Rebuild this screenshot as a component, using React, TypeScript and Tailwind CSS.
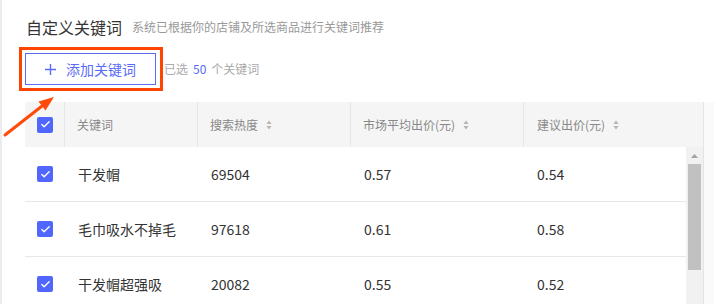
import { Check } from 'lucide-react';

const rows = [
  { keyword: "干发帽", heat: "69504", avg: "0.57", suggest: "0.54" },
  { keyword: "毛巾吸水不掉毛", heat: "97618", avg: "0.61", suggest: "0.58" },
  { keyword: "干发帽超强吸", heat: "20082", avg: "0.55", suggest: "0.52" },
];

function SortIcon() {
  return (
    <svg width="6" height="10" viewBox="0 0 6 10" className="ml-[8px]">
      <path d="M3 0.5 L5.5 4 H0.5 Z" fill="#b5b5b5" />
      <path d="M3 9.5 L5.5 6 H0.5 Z" fill="#b5b5b5" />
    </svg>
  );
}

function Checkbox() {
  return (
    <div className="w-[16px] h-[16px] rounded-[2px] bg-[#5066ff] flex items-center justify-center">
      <Check className="w-[11px] h-[11px] text-white" strokeWidth={3} />
    </div>
  );
}

export default function App() {
  return (
    <div className="relative w-[714px] h-[304px] overflow-hidden bg-white border-l-2 border-[#ececec] font-['Noto_Sans_CJK_SC',sans-serif]">
      {/* title */}
      <div className="flex items-center pl-[24px] pt-[15px] h-[39px]">
        <span className="text-[16px] leading-[24px] text-[#333]">自定义关键词</span>
        <span className="ml-[10px] text-[12px] text-[#999]">系统已根据你的店铺及所选商品进行关键词推荐</span>
      </div>

      {/* add button row */}
      <div className="flex items-center pl-[17px] mt-[8px]">
        <div className="border-[3px] border-[#ff4400] p-[3px] pr-[4px]">
          <button className="w-[131px] h-[32px] border border-[#5a6cf6] flex items-center justify-center gap-[10px] text-[14px] text-[#5a6cf6]">
            <svg width="11" height="11" viewBox="0 0 11 11">
              <path d="M5.5 0 V11 M0 5.5 H11" stroke="#5a6cf6" strokeWidth="1.4" />
            </svg>
            <span>添加关键词</span>
          </button>
        </div>
        <span className="ml-[1px] text-[12px] text-[#aaa]">
          已选<span className="mx-[5px] text-[#5a6cf6]">50</span>个关键词
        </span>
      </div>

      {/* table */}
      <div className="flex ml-[23px] mt-[11px] h-[220px]">
        <div className="w-[678px] flex flex-col">
          <div className="flex shrink-0 h-[45px] bg-[#f5f5f5] text-[12px] text-[#888]">
            <div className="w-[40px] flex items-center pl-[12px] border-r border-[#e6e6e6]">
              <Checkbox />
            </div>
            <div className="w-[133px] flex items-center pl-[12px] border-r border-[#e6e6e6]">关键词</div>
            <div className="w-[153px] flex items-center pl-[12px] border-r border-[#e6e6e6]">
              搜索热度<SortIcon />
            </div>
            <div className="w-[173px] flex items-center pl-[12px] border-r border-[#e6e6e6]">
              市场平均出价(元)<SortIcon />
            </div>
            <div className="flex-1 flex items-center pl-[13px]">
              建议出价(元)<SortIcon />
            </div>
          </div>
          <div className="flex flex-1 min-h-0 overflow-hidden">
            <div className="w-[661px]">
              {rows.map((r) => (
                <div key={r.keyword} className="flex h-[55px] border-b border-[#e8e8e8] text-[14px] text-[#333]">
                  <div className="w-[40px] flex items-center pl-[12px]">
                    <Checkbox />
                  </div>
                  <div className="w-[133px] flex items-center pl-[13px]">{r.keyword}</div>
                  <div className="w-[153px] flex items-center pl-[13px]">{r.heat}</div>
                  <div className="w-[173px] flex items-center pl-[13px]">{r.avg}</div>
                  <div className="flex-1 flex items-center pl-[13px]">{r.suggest}</div>
                </div>
              ))}
            </div>
            {/* scrollbar */}
            <div className="w-[17px] bg-[#f1f1f1] flex flex-col items-center">
              <div className="h-[17px] shrink-0 flex items-center justify-center">
                <svg width="7" height="4" viewBox="0 0 7 4">
                  <path d="M3.5 0 L7 4 H0 Z" fill="#a3a3a3" />
                </svg>
              </div>
              <div className="w-[13px] h-[106px] shrink-0 bg-[#c1c1c1]" />
            </div>
          </div>
        </div>
        <div className="flex-1 border-l border-[#e4e4e4] bg-[#fafafa]" />
      </div>

      {/* annotation arrow */}
      <svg className="absolute left-[-2px] top-0" width="80" height="150" viewBox="0 0 80 150">
        <line x1="5" y1="135" x2="44" y2="104.5" stroke="#ff4a0a" strokeWidth="3" strokeLinecap="round" />
        <polygon points="54,97 45.5,110.5 38.5,101.5" fill="#ff4a0a" />
      </svg>
    </div>
  );
}
